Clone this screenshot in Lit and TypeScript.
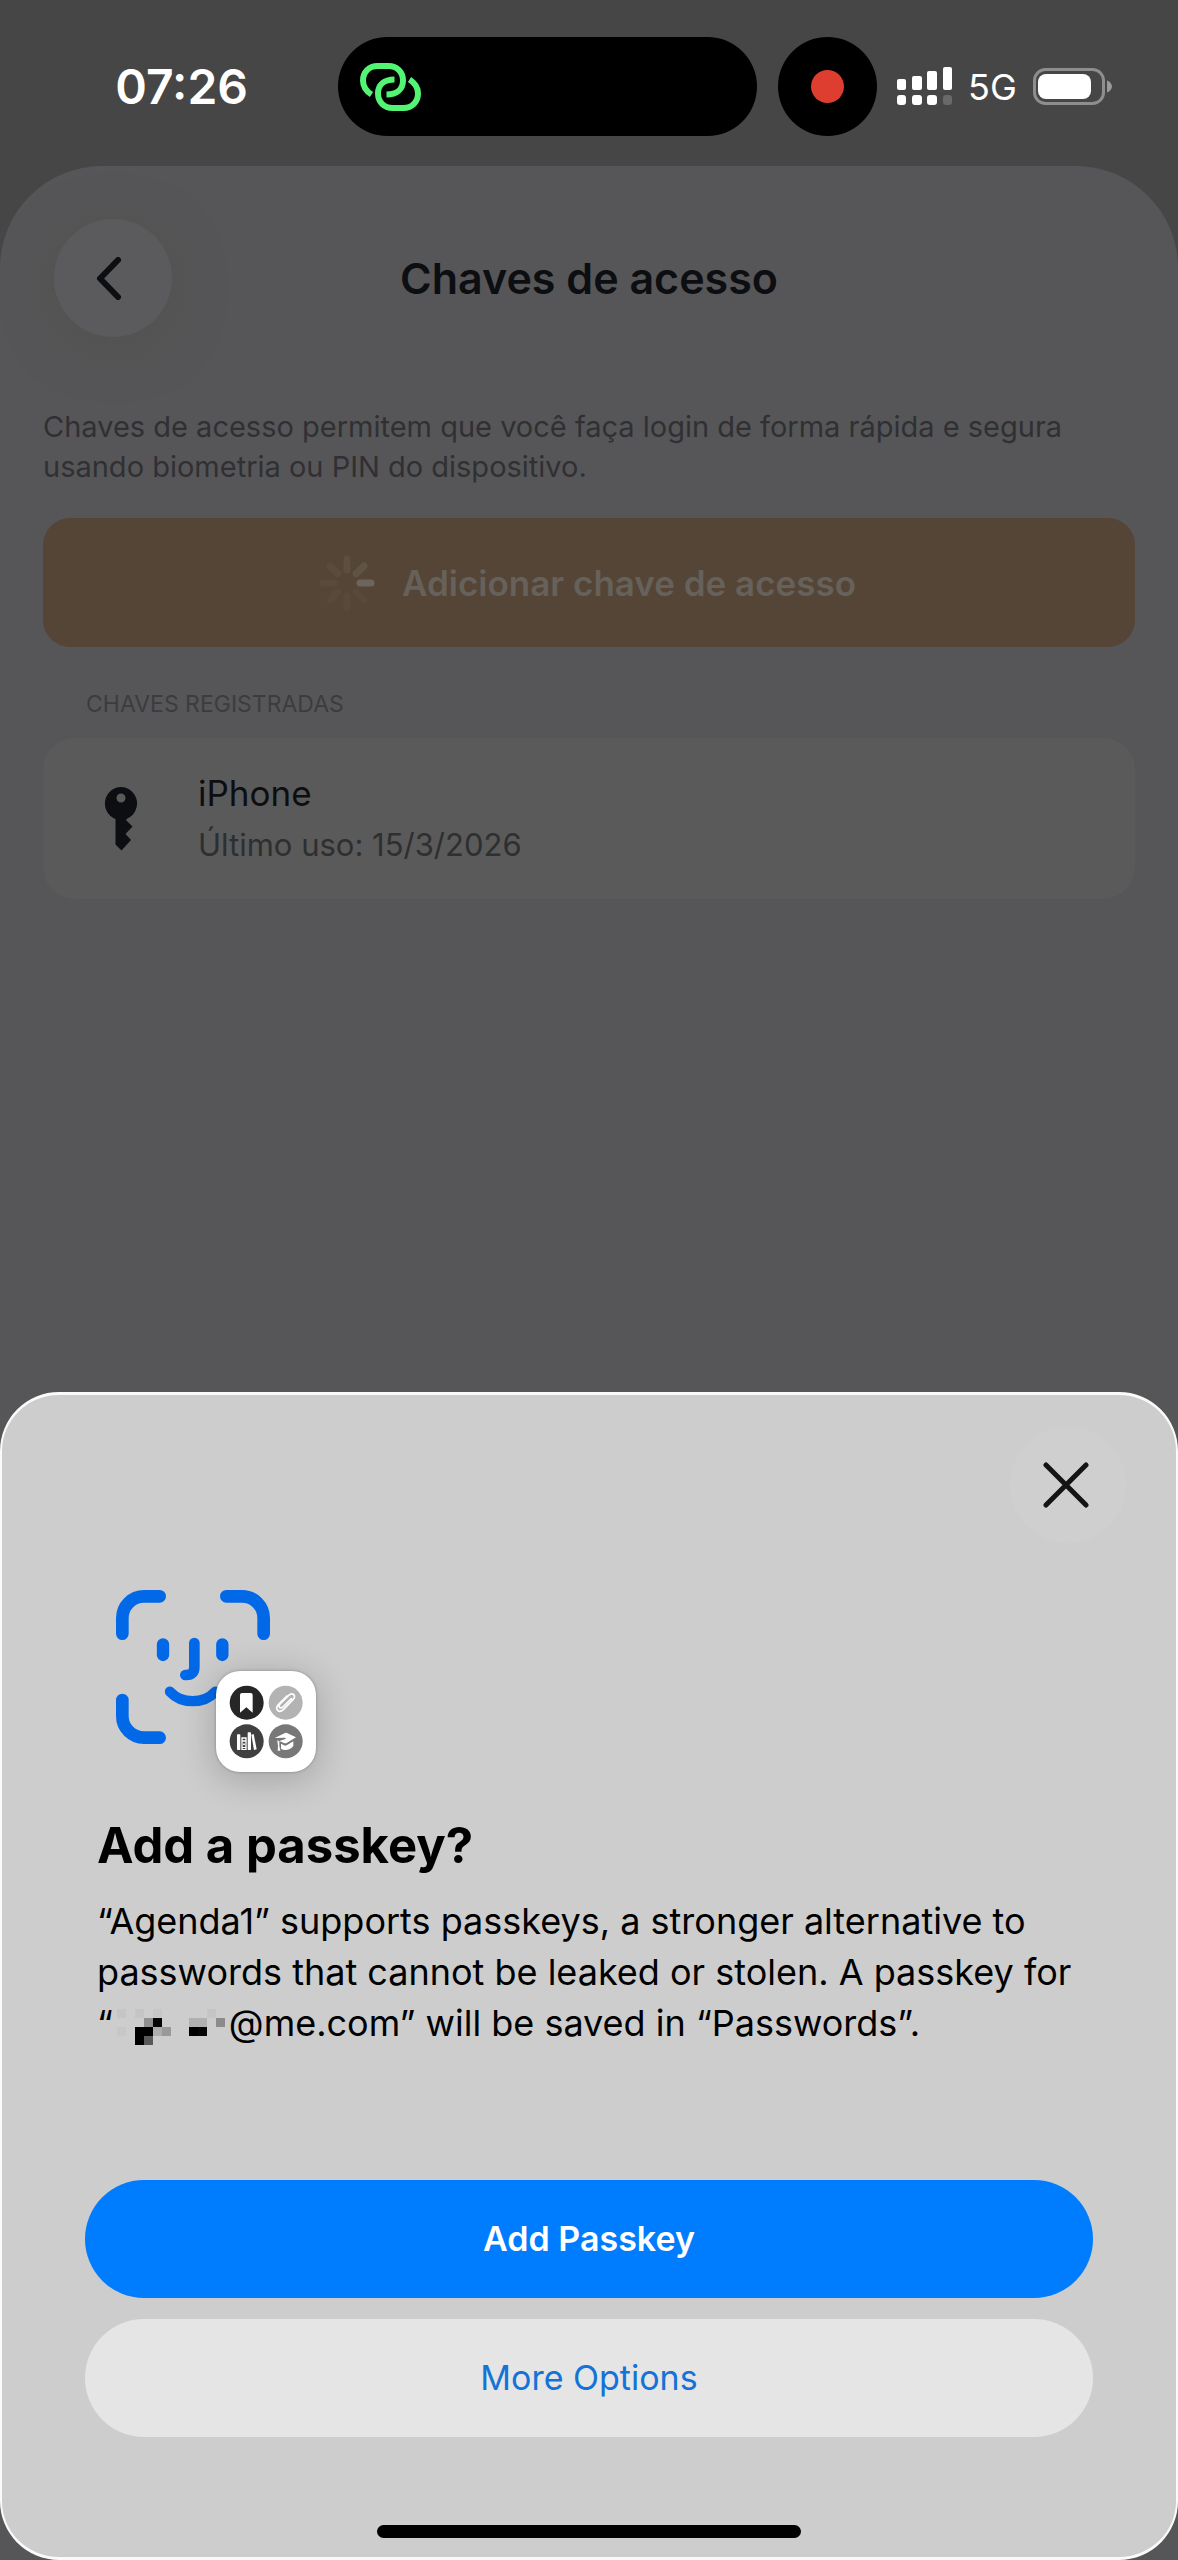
import { LitElement, html, css, svg } from "lit";
import { customElement } from "lit/decorators.js";

const FONT = css`Inter, "Liberation Sans", sans-serif`;

const SPINNER_OPACITIES = [0.2, 0.32, 0.7, 0.1, 0.1, 0.1, 0.12, 0.16];

const MASK_CELLS: Array<[number, number, string]> = [
  [0, 0, "#c5c5c5"],
  [2, 0, "#c5c5c5"],
  [4, 0, "#c6c6c6"],
  [10, 0, "#c5c5c5"],
  [3, 1, "#8f8f8f"],
  [4, 1, "#060606"],
  [8, 1, "#b1b1b1"],
  [9, 1, "#b1b1b1"],
  [11, 1, "#8b8b8b"],
  [0, 2, "#c7c7c7"],
  [2, 2, "#000000"],
  [3, 2, "#000000"],
  [4, 2, "#adadad"],
  [5, 2, "#999999"],
  [8, 2, "#000000"],
  [9, 2, "#060606"],
  [2, 3, "#000000"],
  [3, 3, "#595959"],
];

@customElement("status-bar")
export class StatusBar extends LitElement {
  static styles = css`
    :host {
      display: block;
      color: #fff;
      font-family: ${FONT};
    }
    .bar {
      display: grid;
      grid-template-columns: 338fr 419fr 421fr;
      align-items: center;
      height: 166px;
      padding-top: 7px;
      box-sizing: border-box;
    }
    .time {
      justify-self: end;
      margin-right: 90px;
      font-size: 48px;
      line-height: 56px;
      font-weight: 600;
    }
    .island {
      display: flex;
      align-items: center;
      height: 99px;
      padding-left: 22px;
      border-radius: 50px;
      background: #000;
    }
    .right {
      display: flex;
      align-items: center;
      padding-left: 21px;
    }
    .record {
      display: grid;
      place-items: center;
      width: 99px;
      height: 99px;
      border-radius: 50%;
      background: #000;
    }
    .dot {
      width: 33px;
      height: 33px;
      border-radius: 50%;
      background: #de3e30;
    }
    .signal {
      margin-left: 20px;
    }
    .network {
      margin-left: 15px;
      font-size: 36px;
      line-height: 44px;
    }
    .battery {
      margin-left: 16px;
    }
    svg {
      display: block;
    }
  `;

  render() {
    return html`
      <header class="bar">
        <time class="time">07:26</time>
        <div class="island">
          <svg width="61" height="48" viewBox="0 0 61 48" fill="none" stroke="#53f374" stroke-width="6" aria-hidden="true">
            <path d="M11.5 31.5C6 28 3 23.500 3 17.500C3 9 9 3 17.500 3H28.500C37 3 43 9 43 17.500C43 26 37 31.500 26.500 31.500" />
            <path d="M49.500 16.500C55 20 58 24.500 58 30.500C58 39 52 45 43.500 45H32.500C24 45 18 39 18 30.500C18 22 24 16.500 34.500 16.500" />
          </svg>
        </div>
        <div class="right">
          <div class="record"><span class="dot"></span></div>
          <svg class="signal" width="56" height="39" viewBox="0 0 56 39" fill="#fff" aria-hidden="true">
            <rect x="0" y="12" width="9" height="11" rx="2" />
            <rect x="15" y="9" width="10" height="14" rx="2" />
            <rect x="30" y="4" width="10" height="19" rx="2" />
            <rect x="46" y="0" width="9" height="23" rx="2" />
            <rect x="0" y="28" width="9" height="10" rx="3" />
            <rect x="15" y="28" width="10" height="10" rx="3" />
            <rect x="30" y="28" width="10" height="10" rx="3" />
            <rect x="46" y="28" width="9" height="10" rx="3" fill="#696969" />
          </svg>
          <span class="network">5G</span>
          <svg class="battery" width="80" height="38" viewBox="0 0 80 38" aria-hidden="true">
            <rect x="1.500" y="1.500" width="69" height="34" rx="11" fill="none" stroke="#8e8e8e" stroke-width="3" />
            <rect x="5" y="6" width="53" height="25" rx="8" fill="#fff" />
            <path d="M74 12.500c3 1 5 3.500 5 6s-2 5-5 6z" fill="#9a9a9a" />
          </svg>
        </div>
      </header>
    `;
  }
}

@customElement("passkeys-screen")
export class PasskeysScreen extends LitElement {
  static styles = css`
    :host {
      display: block;
      box-sizing: border-box;
      padding: 53px 43px 0;
      border-radius: 102px 102px 0 0;
      background: #565658;
      color: #0c0e11;
      font-family: ${FONT};
    }
    .nav {
      display: grid;
      grid-template-columns: 1fr auto 1fr;
      align-items: center;
    }
    .back {
      display: grid;
      place-items: center;
      width: 118px;
      height: 118px;
      margin-left: 11px;
      padding: 0 8px 0 0;
      border: 0;
      border-radius: 50%;
      background: #5b5b5d;
      box-shadow: 0 10px 44px 6px rgba(80, 80, 74, 0.5);
      color: inherit;
    }
    .title {
      margin: 0;
      font-size: 43px;
      line-height: 54px;
      font-weight: 600;
    }
    .intro {
      margin: 70px 0 0;
      color: #303033;
      font-size: 29px;
      line-height: 40px;
    }
    .add {
      display: flex;
      align-items: center;
      justify-content: center;
      gap: 26px;
      box-sizing: border-box;
      width: 100%;
      height: 129px;
      margin: 31px 0 0;
      padding: 0 4px 0 0;
      border: 0;
      border-radius: 27px;
      background: #554537;
      color: #66615b;
      font: 600 35px/44px ${FONT};
    }
    .section {
      margin: 44px 43px 0;
      color: #3c3c3f;
      font-size: 23px;
      line-height: 26px;
      font-weight: 400;
    }
    .keys {
      margin: 21px 0 0;
      padding: 0;
      list-style: none;
    }
    .key {
      display: flex;
      align-items: center;
      gap: 60px;
      min-height: 161px;
      box-sizing: border-box;
      padding: 24px 61px;
      border-radius: 32px;
      background: #5a5a5a;
    }
    .name {
      margin: 0;
      font-size: 35px;
      line-height: 46px;
    }
    .used {
      margin: 6px 0 0;
      color: #2d2f30;
      font-size: 31px;
      line-height: 46px;
    }
    svg {
      display: block;
    }
  `;

  render() {
    return html`
      <nav class="nav">
        <button class="back" aria-label="Voltar">
          <svg width="26" height="43" viewBox="0 0 26 43" fill="none" stroke="currentColor" stroke-width="6" stroke-linecap="round" stroke-linejoin="round" aria-hidden="true">
            <path d="M22 3L4 21.500L22 40" />
          </svg>
        </button>
        <h1 class="title">Chaves de acesso</h1>
      </nav>
      <p class="intro">
        Chaves de acesso permitem que você faça login de forma rápida e segura usando biometria ou PIN do dispositivo.
      </p>
      <button class="add" aria-busy="true">
        <svg width="58" height="58" viewBox="-29 -29 58 58" aria-hidden="true">
          ${SPINNER_OPACITIES.map(
            (opacity, i) => svg`<line y1="-13" y2="-24" stroke="#77726b" stroke-width="7" stroke-linecap="round"
              stroke-opacity=${opacity} transform="rotate(${i * 45})" />`,
          )}
        </svg>
        Adicionar chave de acesso
      </button>
      <h2 class="section">CHAVES REGISTRADAS</h2>
      <ul class="keys">
        <li class="key">
          <svg width="34" height="64" viewBox="0 0 34 64" fill="currentColor" aria-hidden="true">
            <path
              fill-rule="evenodd"
              d="M17 0a16.500 16.500 0 0 1 6 31.700L22 33L28.500 39.500L21.500 47L27 53L17.500 63.500L11.500 57.500V31.900A16.500 16.500 0 0 1 17 0zM17 6.500a4.500 4.500 0 1 0 0 9a4.500 4.500 0 1 0 0-9z"
            />
          </svg>
          <div>
            <p class="name">iPhone</p>
            <p class="used">Último uso: 15/3/2026</p>
          </div>
        </li>
      </ul>
    `;
  }
}

@customElement("passkey-dialog")
export class PasskeyDialog extends LitElement {
  static styles = css`
    :host {
      display: block;
      font-family: ${FONT};
    }
    .dialog {
      display: flex;
      flex-direction: column;
      box-sizing: border-box;
      padding: 32px 83px 19px;
      border: 3px solid #fafafa;
      border-left-width: 2px;
      border-right-width: 2px;
      border-radius: 59px;
      background: #cdcdcd;
      color: #000;
    }
    .close {
      display: grid;
      place-items: center;
      align-self: flex-end;
      width: 116px;
      height: 116px;
      margin-right: -33px;
      padding: 0 4px 0 0;
      border: 0;
      border-radius: 50%;
      background: #cfcfcf;
    }
    .art {
      position: relative;
      width: 154px;
      margin: 47px 0 0 31px;
    }
    .badge {
      position: absolute;
      left: 100px;
      top: 81px;
      border-radius: 24px;
      background: #fff;
      box-shadow: 0 6px 34px 4px rgba(0, 0, 0, 0.18), 0 0 3px rgba(0, 0, 0, 0.3);
    }
    .title {
      margin: 73px 12px 0;
      font-size: 49px;
      line-height: 58px;
      font-weight: 700;
    }
    .text {
      margin: 21px 12px 0;
      font-size: 36px;
      line-height: 51px;
    }
    .mask {
      display: inline-block;
      vertical-align: -9px;
      margin: 0 4px;
    }
    .action {
      height: 118px;
      padding: 0;
      border: 0;
      border-radius: 59px;
      font: 400 34px/44px ${FONT};
    }
    .primary {
      margin-top: 131px;
      background: #007cff;
      color: #fff;
      font-weight: 600;
    }
    .secondary {
      margin-top: 21px;
      background: #e5e5e5;
      color: #1373d8;
    }
    .home {
      align-self: center;
      width: 42%;
      height: 13px;
      margin-top: 88px;
      border-radius: 7px;
      background: #000;
    }
    svg {
      display: block;
    }
  `;

  private faceId() {
    return html`
      <svg width="154" height="154" viewBox="0 0 462 462" fill="none" stroke="#0168e8" stroke-width="38" stroke-linecap="round" aria-hidden="true">
        <path d="M19 131V84a65 65 0 0 1 65-65h47" />
        <path d="M331 19h47a65 65 0 0 1 65 65v47" />
        <path d="M19 330v48a65 65 0 0 0 65 65h47" />
        <path d="M141 163v32M319 163v32" stroke-width="37" />
        <path d="M235 159v72q0 24-24 24h-3" stroke-width="32" />
        <path d="M162 305c35 38 101 38 136 0" stroke-width="31" />
      </svg>
    `;
  }

  private badge() {
    return html`
      <svg class="badge" width="100" height="101" viewBox="0 0 300 303" aria-hidden="true">
        <circle cx="92" cy="95" r="51" fill="#262626" />
        <circle cx="209" cy="95" r="51" fill="#b3b3b3" />
        <circle cx="92" cy="211" r="51" fill="#404040" />
        <circle cx="209" cy="211" r="51" fill="#787878" />
        <path d="M72 72q0-6 6-6h26q6 0 6 6v53L91 109L72 125z" fill="#fff" />
        <path
          d="M225 84L200 109q-6 5-10 1t1-10L217 74q9-8 15-2t-2 15L201 117q-10 9-17 2t2-17L212 76"
          fill="none"
          stroke="#fff"
          stroke-width="5"
          stroke-linecap="round"
          stroke-linejoin="round"
          transform="translate(1 -1)"
        />
        <g fill="#fff">
          <rect x="63" y="190" width="10" height="47" rx="2" />
          <path fill-rule="evenodd" d="M76 199h16v38H76zM80 203v5h8v-5zM80 212v16h8v-16zM80 231v3h8v-3z" />
          <circle cx="84" cy="220" r="3" />
          <rect x="95" y="184" width="10" height="53" rx="2" />
          <path d="M106 191l7-2l9 46l-8 2z" />
          <path d="M176 201L207 186q3-1 6 0L240 199l-28 17q-4 2-8 0L190 210l20-7l-3-3z" />
          <path d="M195 218l9 5q4 2 8 0l20-12v14q-10 13-27 12q-7-1-10-4z" />
          <path d="M184 208l6 3v14l3 14h-8l1-13z" />
        </g>
      </svg>
    `;
  }

  private maskedName() {
    return html`<svg class="mask" width="108" height="36" viewBox="0 0 108 36" shape-rendering="crispEdges" aria-hidden="true">
      ${MASK_CELLS.map(([x, y, fill]) => svg`<rect x=${x * 9} y=${y * 9} width="9" height="9" fill=${fill} />`)}
    </svg>`;
  }

  render() {
    return html`
      <section class="dialog" role="dialog" aria-labelledby="passkey-title">
        <button class="close" aria-label="Close">
          <svg width="46" height="46" viewBox="0 0 46 46" stroke="#141414" stroke-width="5" stroke-linecap="round" aria-hidden="true">
            <path d="M3 3L43 43M43 3L3 43" />
          </svg>
        </button>
        <div class="art">${this.faceId()}${this.badge()}</div>
        <h2 class="title" id="passkey-title">Add a passkey?</h2>
        <p class="text">
          “Agenda1” supports passkeys, a stronger alternative to passwords that cannot be leaked or stolen. A passkey for
          <br />“${this.maskedName()}@me.com” will be saved in “Passwords”.
        </p>
        <button class="action primary">Add Passkey</button>
        <button class="action secondary">More Options</button>
        <div class="home"></div>
      </section>
    `;
  }
}

@customElement("app-root")
export class AppRoot extends LitElement {
  static styles = css`
    :host {
      display: grid;
      min-height: 100vh;
      background: #464646;
    }
    .app,
    .overlay {
      grid-area: 1 / 1;
    }
    .app {
      display: flex;
      flex-direction: column;
    }
    .screen {
      flex: 1;
    }
    .overlay {
      align-self: end;
    }
  `;

  render() {
    return html`
      <main class="app">
        <status-bar></status-bar>
        <passkeys-screen class="screen"></passkeys-screen>
      </main>
      <passkey-dialog class="overlay"></passkey-dialog>
    `;
  }
}
